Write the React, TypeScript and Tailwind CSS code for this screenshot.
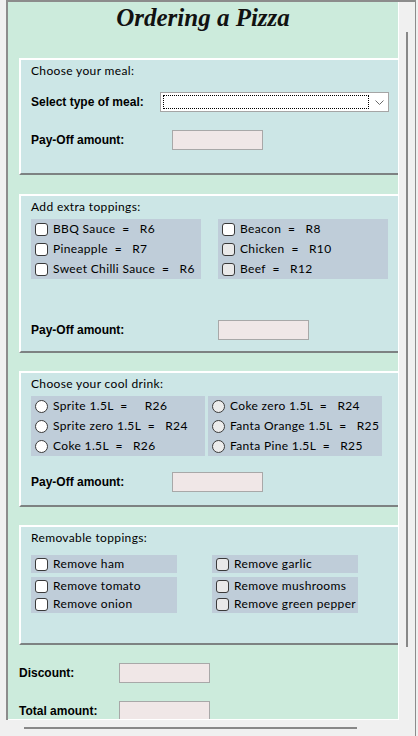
import React from "react";

const label = "font-['Lato',sans-serif] text-[12px] tracking-[0.35px] text-black whitespace-pre leading-[16px]";
const boldLabel = "font-['Liberation_Sans',Arial,sans-serif] font-bold text-[12px] text-black leading-[16px]";

function Check({ gray }: { gray?: boolean }) {
  return (
    <span
      className={`w-[13px] h-[13px] rounded-[3px] border border-[#3a3a3a] shrink-0 ${
        gray ? "bg-[#e9e9e9]" : "bg-white"
      }`}
    />
  );
}

function Radio({ gray }: { gray?: boolean }) {
  return (
    <span
      className={`w-[13px] h-[13px] rounded-full border border-[#3a3a3a] shrink-0 ${
        gray ? "bg-[#ececec]" : "bg-white"
      }`}
    />
  );
}

function Row({ text, kind, gray, h = 20 }: { text: string; kind: "check" | "radio"; gray?: boolean; h?: number }) {
  return (
    <div className={`flex items-center pl-[4px] gap-[5px] ${h === 18 ? "h-[18px]" : "h-[20px]"}`}>
      {kind === "check" ? <Check gray={gray} /> : <Radio gray={gray} />}
      <span className={label}>{text}</span>
    </div>
  );
}

function AmountBox() {
  return <div className="w-[91px] h-[20px] bg-[#f0e7e7] border border-[#a8a8a8] shrink-0" />;
}

export default function App() {
  return (
    <div className="w-[418px] h-[736px] bg-[#f0f0f0] flex flex-col overflow-hidden">
      <div className="ml-[6px] w-[410px] h-[720px] border-t-2 border-l-2 border-r border-[#8c8c8c] flex">
        {/* scrolled form area */}
        <div className="w-[391px] h-[718px] bg-[#ccebdc] border-r border-b border-white overflow-hidden">
          <h1 className="mt-[1px] h-[30px] leading-[30px] text-center font-['Liberation_Serif',serif] italic font-bold text-[25px] text-[#111]">
            Ordering a Pizza
          </h1>

          {/* meal */}
          <section className="mt-[25px] ml-[11px] w-[400px] h-[117px] bg-[#cce6e6] border-t-2 border-l-2 border-white border-b-2 border-b-[#7d8282] pl-[10px]">
            <div className={`mt-[3px] h-[16px] ${label}`}>Choose your meal:</div>
            <div className="mt-[13px] flex items-center h-[20px]">
              <span className={`w-[129px] ${boldLabel}`}>Select type of meal:</span>
              <div className="w-[229px] h-[20px] bg-white border border-[#a5a5a5] flex items-center pl-[2px]">
                <div className="w-[206px] h-[14px] border border-dotted border-black" />
                <svg width="9" height="6" viewBox="0 0 9 6" className="ml-[6px] mt-[2px]">
                  <path d="M0.5 0.5 L4.5 4.5 L8.5 0.5" fill="none" stroke="#6a6a6a" strokeWidth="1" />
                </svg>
              </div>
            </div>
            <div className="mt-[18px] flex items-center h-[20px]">
              <span className={`w-[141px] ${boldLabel}`}>Pay-Off amount:</span>
              <AmountBox />
            </div>
          </section>

          {/* extra toppings */}
          <section className="mt-[19px] ml-[11px] w-[400px] h-[159px] bg-[#cce6e6] border-t-2 border-l-2 border-white border-b-2 border-b-[#7d8282] pl-[10px]">
            <div className={`mt-[3px] h-[16px] ${label}`}>Add extra toppings:</div>
            <div className="mt-[4px] flex gap-[17px]">
              <div className="w-[170px] h-[60px] bg-[#bfcdd9]">
                <Row kind="check" text="BBQ Sauce  =   R6" />
                <Row kind="check" text="Pineapple  =   R7" />
                <Row kind="check" text="Sweet Chilli Sauce  =   R6" />
              </div>
              <div className="w-[170px] h-[60px] bg-[#bfcdd9]">
                <Row kind="check" text="Beacon  =   R8" />
                <Row kind="check" gray text="Chicken  =   R10" />
                <Row kind="check" gray text="Beef  =   R12" />
              </div>
            </div>
            <div className="mt-[41px] flex items-center h-[20px]">
              <span className={`w-[187px] ${boldLabel}`}>Pay-Off amount:</span>
              <AmountBox />
            </div>
          </section>

          {/* cool drink */}
          <section className="mt-[18px] ml-[11px] w-[400px] h-[136px] bg-[#cce6e6] border-t-2 border-l-2 border-white border-b-2 border-b-[#7d8282] pl-[10px]">
            <div className={`mt-[3px] h-[16px] ${label}`}>Choose your cool drink:</div>
            <div className="mt-[4px] flex gap-[3px]">
              <div className="w-[174px] h-[60px] bg-[#bfcdd9]">
                <Row kind="radio" text="Sprite 1.5L  =     R26" />
                <Row kind="radio" text="Sprite zero 1.5L  =   R24" />
                <Row kind="radio" text="Coke 1.5L  =   R26" />
              </div>
              <div className="w-[174px] h-[60px] bg-[#bfcdd9]">
                <Row kind="radio" gray text="Coke zero 1.5L  =   R24" />
                <Row kind="radio" gray text="Fanta Orange 1.5L  =   R25" />
                <Row kind="radio" gray text="Fanta Pine 1.5L  =   R25" />
              </div>
            </div>
            <div className="mt-[16px] flex items-center h-[20px]">
              <span className={`w-[141px] ${boldLabel}`}>Pay-Off amount:</span>
              <AmountBox />
            </div>
          </section>

          {/* removable toppings */}
          <section className="mt-[18px] ml-[11px] w-[400px] h-[120px] bg-[#cce6e6] border-t-2 border-l-2 border-white border-b-2 border-b-[#7d8282] pl-[10px]">
            <div className={`mt-[3px] h-[16px] ${label}`}>Removable toppings:</div>
            <div className="mt-[9px] flex gap-[35px]">
              <div className="w-[146px]">
                <div className="h-[18px] bg-[#bfcdd9]">
                  <Row kind="check" h={18} text="Remove ham" />
                </div>
                <div className="mt-[4px] h-[36px] bg-[#bfcdd9]">
                  <Row kind="check" h={18} text="Remove tomato" />
                  <Row kind="check" h={18} text="Remove onion" />
                </div>
              </div>
              <div className="w-[146px]">
                <div className="h-[18px] bg-[#bfcdd9]">
                  <Row kind="check" h={18} gray text="Remove garlic" />
                </div>
                <div className="mt-[4px] h-[36px] bg-[#bfcdd9]">
                  <Row kind="check" h={18} gray text="Remove mushrooms" />
                  <Row kind="check" h={18} gray text="Remove green pepper" />
                </div>
              </div>
            </div>
          </section>

          <div className="mt-[18px] ml-[11px] flex items-center h-[20px]">
            <span className={`w-[100px] ${boldLabel}`}>Discount:</span>
            <AmountBox />
          </div>
          <div className="mt-[18px] ml-[11px] flex items-center h-[20px]">
            <span className={`w-[100px] ${boldLabel}`}>Total amount:</span>
            <AmountBox />
          </div>
        </div>

        {/* vertical scrollbar */}
        <div className="flex-1 pt-[30px] pl-[7px]">
          <div className="w-[2px] h-[615px] bg-[#888888]" />
        </div>
      </div>

      {/* horizontal scrollbar */}
      <div className="ml-[6px] w-[410px] h-[16px] border-r border-[#8c8c8c] pt-[7px] pl-[18px]">
        <div className="w-[333px] h-[2px] bg-[#888888]" />
      </div>
    </div>
  );
}
